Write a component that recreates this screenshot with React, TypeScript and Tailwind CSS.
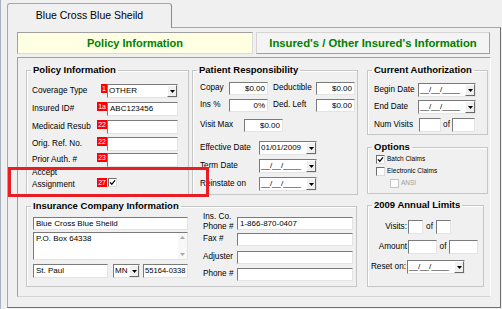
import React from 'react';

type Kids = { children?: React.ReactNode };

const sunken = 'bg-white border border-t-[#7a7a7a] border-l-[#7a7a7a] border-r-[#e4e4e4] border-b-[#e4e4e4]';

function Edit({ cls, value = '', right = false }: { cls: string; value?: string; right?: boolean }) {
    return (
        <div className={`${sunken} ${cls} flex items-center px-[2px] text-[8px] leading-none whitespace-nowrap overflow-hidden ${right ? 'justify-end' : ''}`}>
            {value}
        </div>
    );
}

function Arrow({ color = '#000' }: { color?: string }) {
    return (
        <svg width="5" height="3" viewBox="0 0 5 3">
            <path d="M0 0h5L2.5 3z" fill={color}/>
        </svg>
    );
}

function Select({ cls, value }: { cls: string; value: string }) {
    return (
        <div className={`${sunken} ${cls} flex`}>
            <span className="flex-1 self-center pl-[1px] text-[8px] leading-none whitespace-nowrap overflow-hidden">{value}</span>
            <span className="w-[10px] bg-[#f0f0f0] border border-t-white border-l-white border-r-[#696969] border-b-[#696969] flex items-center justify-center">
                <Arrow/>
            </span>
        </div>
    );
}

function Badge({ n }: { n: string }) {
    return <span className="bg-[#ff0000] text-white text-[7px] leading-[9px] h-[9px] px-[1px]">{n}</span>;
}

function Check({ checked = false, disabled = false }: { checked?: boolean; disabled?: boolean }) {
    return (
        <span className={`w-[9px] h-[9px] bg-white border flex items-center justify-center ${disabled ? 'border-[#c4c4c4]' : 'border-t-[#6e6e6e] border-l-[#6e6e6e] border-r-[#dcdcdc] border-b-[#dcdcdc]'}`}>
            {checked && (
                <svg width="7" height="7" viewBox="0 0 7 7">
                    <path d="M1 3.4 L2.8 5.3 L6 1.4" stroke="#000" strokeWidth="1.3" fill="none"/>
                </svg>
            )}
        </span>
    );
}

function Group({ title, cls, children }: Kids & { title: string; cls: string }) {
    return (
        <fieldset className={`border border-[#c6c6c6] shadow-[inset_1px_1px_0_#ffffff] ${cls}`}>
            <legend className="ml-[4px] px-[2px] text-[9.5px] font-bold leading-[12px]">{title}</legend>
            {children}
        </fieldset>
    );
}

function Lbl({ cls, children }: Kids & { cls: string }) {
    return <span className={`text-[8.2px] leading-none whitespace-nowrap ${cls}`}>{children}</span>;
}

function PolicyRow({ cls = '', label, badge, children }: Kids & { cls?: string; label: string; badge: string }) {
    return (
        <div className={`flex items-start h-[14px] ${cls}`}>
            <span className="w-[65px] text-[8.2px] leading-[14px] whitespace-nowrap">{label}</span>
            <span className="w-[10px] flex justify-end"><Badge n={badge}/></span>
            {children}
        </div>
    );
}

export default function App() {
    return (
        <div className="w-[502px] h-[309px] bg-[#f0f0f0] border-l border-[#aab3bf] overflow-hidden relative font-['Liberation_Sans',Arial,sans-serif] text-black">
            <div className="pt-[3px] pl-[6px]">
                {/* tab */}
                <div className="relative z-10 w-[165px] h-[25px] -mb-px bg-[#f0f0f0] border border-b-0 border-[#a8a8a8] border-r-[#8a8a8a] rounded-t-[3px] flex items-center justify-center text-[10.5px]">
                    Blue Cross Blue Sheild
                </div>
                <div className="w-[494px] h-[281px] border border-[#a8a8a8] border-r-[#6e6e6e] border-b-[#6e6e6e] pt-[4px] pl-[9px]">
                    <div className="flex h-[22px]">
                        <div className="w-[236px] bg-[#ffffe1] border border-[#a0a0a0] border-r-[#dadada] border-b-[#dadada] flex items-center justify-center text-[11px] font-bold text-[#008000]">
                            Policy Information
                        </div>
                        <div className="ml-[3px] w-[234px] bg-[#f4f4f4] border border-[#d4d4d4] border-r-[#a0a0a0] border-b-[#a0a0a0] flex items-center justify-center text-[11.3px] font-bold text-[#008000]">
                            Insured's / Other Insured's Information
                        </div>
                    </div>

                    <div className="mt-[3px] w-[474px] h-[240px] border border-[#a0a0a0] border-r-white border-b-[#d4d4d4] pt-[6px] pl-[8px] flex">
                        {/* left part */}
                        <div className="w-[332px] flex flex-col">
                            <div className="flex">
                                <Group title="Policy Information" cls="w-[163px] h-[131px]">
                                    <div className="pl-[5px] pt-[8px]">
                                        <PolicyRow label="Coverage Type" badge="1">
                                            <Select cls="w-[71px] h-[14px]" value="OTHER"/>
                                        </PolicyRow>
                                        <PolicyRow cls="mt-[4px]" label="Insured ID#" badge="1a">
                                            <Edit cls="w-[71px] h-[14px]" value="ABC123456"/>
                                        </PolicyRow>
                                        <PolicyRow cls="mt-[4px]" label="Medicaid Resub" badge="22">
                                            <Edit cls="w-[71px] h-[14px]"/>
                                        </PolicyRow>
                                        <PolicyRow cls="mt-[3px]" label="Orig. Ref. No." badge="22">
                                            <Edit cls="w-[71px] h-[14px]"/>
                                        </PolicyRow>
                                        <PolicyRow cls="mt-[2px]" label="Prior Auth. #" badge="23">
                                            <Edit cls="w-[71px] h-[14px]"/>
                                        </PolicyRow>
                                        <div className="flex items-start">
                                            <span className="w-[65px] text-[8.2px] leading-[12px]">Accept<br/>Assignment</span>
                                            <span className="w-[10px] mt-[11px] flex justify-end"><Badge n="27"/></span>
                                            <span className="mt-[11px] ml-[1px]"><Check checked/></span>
                                        </div>
                                    </div>
                                </Group>

                                <Group title="Patient Responsibility" cls="ml-[3px] w-[166px] h-[131px]">
                                    <div className="pl-[7px] pt-[6px]">
                                        <div className="flex items-center h-[13px]">
                                            <Lbl cls="w-[29px]">Copay</Lbl>
                                            <Edit cls="w-[39px] h-[13px]" value="$0.00" right/>
                                            <Lbl cls="ml-[5px] w-[43px]">Deductible</Lbl>
                                            <Edit cls="w-[39px] h-[13px]" value="$0.00" right/>
                                        </div>
                                        <div className="flex items-center h-[13px] mt-[4px]">
                                            <Lbl cls="w-[29px]">Ins %</Lbl>
                                            <Edit cls="w-[39px] h-[13px]" value="0%" right/>
                                            <Lbl cls="ml-[5px] w-[43px]">Ded. Left</Lbl>
                                            <Edit cls="w-[39px] h-[13px]" value="$0.00" right/>
                                        </div>
                                        <div className="flex items-center h-[13px] mt-[7px]">
                                            <Lbl cls="w-[44px]">Visit Max</Lbl>
                                            <Edit cls="w-[39px] h-[13px]" value="$0.00" right/>
                                        </div>
                                        <div className="flex items-center h-[14px] mt-[9px]">
                                            <Lbl cls="w-[59px]">Effective Date</Lbl>
                                            <Select cls="w-[58px] h-[14px]" value="01/01/2009"/>
                                        </div>
                                        <div className="flex items-center h-[14px] mt-[4px]">
                                            <Lbl cls="w-[59px]">Term Date</Lbl>
                                            <Select cls="w-[58px] h-[14px]" value="__/__/____"/>
                                        </div>
                                        <div className="flex items-center h-[14px] mt-[4px]">
                                            <Lbl cls="w-[59px]">Reinstate on</Lbl>
                                            <Select cls="w-[58px] h-[14px]" value="__/__/____"/>
                                        </div>
                                    </div>
                                </Group>
                            </div>

                            <Group title="Insurance Company Information" cls="mt-[5px] w-[331px] h-[87px]">
                                <div className="pl-[6px] flex items-start">
                                    <div className="w-[155px] flex flex-col">
                                        <Edit cls="mt-[5px] w-[155px] h-[13px]" value="Blue Cross Blue Sheild"/>
                                        <div className={`${sunken} mt-[2px] h-[28px] flex`}>
                                            <span className="flex-1 px-[2px] pt-[2px] text-[8px] leading-none">P.O. Box 64338</span>
                                            <span className="w-[9px] bg-[#f7f7f7] flex flex-col items-center justify-between py-[3px]">
                                                <svg width="5" height="3" viewBox="0 0 5 3"><path d="M0 3h5L2.5 0z" fill="#a8a8a8"/></svg>
                                                <Arrow color="#a8a8a8"/>
                                            </span>
                                        </div>
                                        <div className="mt-[4px] flex h-[14px]">
                                            <Edit cls="w-[75px] h-[14px]" value="St. Paul"/>
                                            <Select cls="ml-[5px] w-[27px] h-[14px]" value="MN"/>
                                            <div className={`${sunken} ml-[3px] w-[45px] h-[14px] flex items-center pl-[1px] text-[7.6px] leading-none whitespace-nowrap overflow-hidden`}>55164-0338</div>
                                        </div>
                                    </div>
                                    <div className="ml-[15px] flex flex-col">
                                        <div className="flex items-start">
                                            <span className="w-[34px] h-[20px] text-[8.2px] leading-[10px] whitespace-nowrap">Ins. Co.<br/>Phone #</span>
                                            <Edit cls="mt-[5px] w-[116px] h-[13px]" value="1-866-870-0407"/>
                                        </div>
                                        <div className="flex items-center mt-[1px]">
                                            <Lbl cls="w-[34px]">Fax #</Lbl>
                                            <Edit cls="w-[116px] h-[13px]"/>
                                        </div>
                                        <div className="flex items-center mt-[5px]">
                                            <Lbl cls="w-[34px]">Adjuster</Lbl>
                                            <Edit cls="w-[116px] h-[13px]"/>
                                        </div>
                                        <div className="flex items-center mt-[4px]">
                                            <Lbl cls="w-[34px]">Phone #</Lbl>
                                            <Edit cls="w-[116px] h-[13px]"/>
                                        </div>
                                    </div>
                                </div>
                            </Group>
                        </div>

                        {/* right column */}
                        <div className="ml-[9px] w-[121px] flex flex-col">
                            <Group title="Current Authorization" cls="w-[121px] h-[71px]">
                                <div className="pl-[6px] pt-[7px]">
                                    <div className="flex items-center h-[14px]">
                                        <Lbl cls="w-[44px]">Begin Date</Lbl>
                                        <Select cls="w-[58px] h-[14px]" value="__/__/____"/>
                                    </div>
                                    <div className="flex items-center h-[14px] mt-[3px]">
                                        <Lbl cls="w-[44px]">End Date</Lbl>
                                        <Select cls="w-[58px] h-[14px]" value="__/__/____"/>
                                    </div>
                                    <div className="flex items-center h-[14px] mt-[4px]">
                                        <Lbl cls="w-[45px]">Num Visits</Lbl>
                                        <Edit cls="w-[22px] h-[14px]"/>
                                        <Lbl cls="w-[11px] text-center">of</Lbl>
                                        <Edit cls="w-[23px] h-[14px]"/>
                                    </div>
                                </div>
                            </Group>

                            <Group title="Options" cls="mt-[6px] w-[121px] h-[53px]">
                                <div className="pl-[8px] pt-[2px] flex flex-col gap-[3px] text-[6.5px] leading-none">
                                    <div className="flex items-center gap-[2px]"><Check checked/><span>Batch Claims</span></div>
                                    <div className="flex items-center gap-[2px]"><Check/><span>Electronic Claims</span></div>
                                    <div className="flex items-center gap-[2px] ml-[14px] text-[#a0a0a0]"><Check disabled/><span>ANSI</span></div>
                                </div>
                            </Group>

                            <Group title="2009 Annual Limits" cls="mt-[5px] w-[117px] h-[88px]">
                                <div className="pt-[9px]">
                                    <div className="flex items-center h-[14px]">
                                        <Lbl cls="w-[40px] text-right pr-[1px]">Visits:</Lbl>
                                        <Edit cls="w-[15px] h-[14px]"/>
                                        <Lbl cls="w-[13px] text-center">of</Lbl>
                                        <Edit cls="w-[15px] h-[14px]"/>
                                    </div>
                                    <div className="flex items-center h-[14px] mt-[6px]">
                                        <Lbl cls="w-[40px] text-right pr-[1px]">Amount</Lbl>
                                        <Edit cls="w-[29px] h-[14px]"/>
                                        <Lbl cls="w-[12px] text-center">of</Lbl>
                                        <Edit cls="w-[29px] h-[14px]"/>
                                    </div>
                                    <div className="flex items-center h-[14px] mt-[6px]">
                                        <Lbl cls="w-[39px] text-right pr-[1px]">Reset on:</Lbl>
                                        <Select cls="w-[58px] h-[14px]" value="__/__/____"/>
                                    </div>
                                </div>
                            </Group>
                        </div>
                    </div>
                </div>
            </div>

            {/* red highlight around Accept Assignment */}
            <div className="absolute left-[7px] top-[167px] w-[201px] h-[30px] border-[3px] border-[#ea1c24]"/>
        </div>
    );
}
